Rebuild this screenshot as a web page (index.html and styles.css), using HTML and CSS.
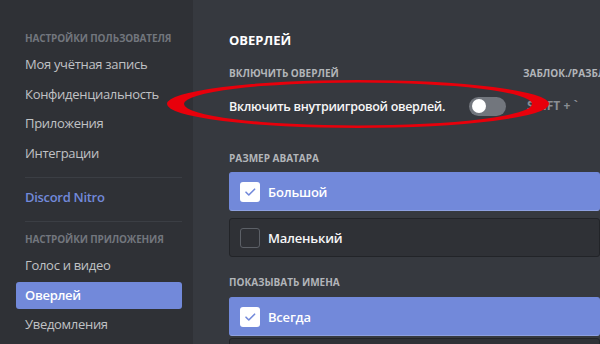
FILE: index.html
```html
<!DOCTYPE HTML>
<html lang="ru">
<head>
    <meta charset="UTF-8">
    <meta name="viewport" content="width=device-width, initial-scale=1.0">
    <title>Настройки — Оверлей</title>
    <link rel="stylesheet" href="styles.css">
</head>
<body>
    <div class="app">
        <nav class="sidebar">
            <div class="side-header">Настройки пользователя</div>
            <div class="side-item">Моя учётная запись</div>
            <div class="side-item">Конфиденциальность</div>
            <div class="side-item">Приложения</div>
            <div class="side-item">Интеграции</div>
            <div class="side-sep"></div>
            <div class="side-item nitro">Discord Nitro</div>
            <div class="side-sep second"></div>
            <div class="side-header">Настройки приложения</div>
            <div class="side-item">Голос и видео</div>
            <div class="side-item active">Оверлей</div>
            <div class="side-item">Уведомления</div>
        </nav>

        <main class="content">
            <h2 class="title">Оверлей</h2>

            <div class="overlay-row">
                <div class="col-enable">
                    <div class="label">Включить оверлей</div>
                    <div class="switch-row">
                        <span class="switch-text">Включить внутриигровой оверлей.</span>
                        <span class="switch"><span class="knob"></span></span>
                    </div>
                </div>
                <div class="col-keybind">
                    <div class="label">Заблок./разблок. оверлей</div>
                    <div class="keybind">SHIFT + `</div>
                </div>
            </div>

            <div class="label section">Размер аватара</div>
            <div class="radio selected">
                <span class="check">
                    <svg width="20" height="20" viewBox="0 0 20 20"><path d="M6 10.2l2.8 2.8L14.6 7.2" fill="none" stroke="#7289da" stroke-width="1.6" stroke-linecap="round" stroke-linejoin="round"/></svg>
                </span>
                Большой
            </div>
            <div class="radio">
                <span class="check empty"></span>
                Маленький
            </div>

            <div class="label section">Показывать имена</div>
            <div class="radio selected">
                <span class="check">
                    <svg width="20" height="20" viewBox="0 0 20 20"><path d="M6 10.2l2.8 2.8L14.6 7.2" fill="none" stroke="#7289da" stroke-width="1.6" stroke-linecap="round" stroke-linejoin="round"/></svg>
                </span>
                Всегда
            </div>
            <div class="radio last"></div>
        </main>

        <!-- hand-drawn red circle around the toggle -->
        <svg class="highlight" width="400" height="54" viewBox="0 0 400 54">
            <path fill="#e8000b" fill-rule="evenodd"
                d="M7,26 a191,24 0 1,0 382,0 a191,24 0 1,0 -382,0Z
                   M24,26 a174,21.5 0 1,0 348,0 a174,21.5 0 1,0 -348,0Z"/>
        </svg>
    </div>
</body>
</html>
```

FILE: styles.css
```css
body {
    margin: 0;
    background-color: #36393f;
    font-family: "Open Sans", "Noto Sans", sans-serif;
    overflow: hidden;
}

.app {
    position: relative;
    display: flex;
    width: 600px;
    height: 344px;
    overflow: hidden;
}

/* sidebar */
.sidebar {
    width: 193px;
    flex-shrink: 0;
    display: flex;
    flex-direction: column;
    background-color: #2f3136;
    padding: 31px 11px 0 16px;
    box-sizing: border-box;
}
.side-header {
    font-size: 10px;
    font-weight: 700;
    line-height: 14px;
    letter-spacing: -0.15px;
    text-transform: uppercase;
    color: #72767d;
    padding-left: 9px;
    margin-bottom: 6px;
    white-space: nowrap;
}
.side-item {
    height: 27px;
    flex-shrink: 0;
    line-height: 27px;
    padding-left: 9px;
    margin-bottom: 2.5px;
    font-size: 13px;
    letter-spacing: -0.3px;
    color: #c0c2c5;
    border-radius: 3px;
    white-space: nowrap;
}
.side-item.active {
    background-color: #7289da;
    color: #fff;
    font-weight: 600;
}
.side-item.nitro {
    color: #7289da;
    font-weight: 600;
}
.side-sep {
    height: 1px;
    flex-shrink: 0;
    background-color: #3b3e44;
    margin: 8px 0 6px 9px;
}
.side-sep.second {
    margin: 7.5px 0 10px 9px;
}

/* content */
.content {
    flex: 1;
    padding: 31px 0 0 36px;
    min-width: 0;
}
.title {
    margin: 0 0 17px;
    font-size: 13px;
    font-weight: 700;
    line-height: 18px;
    text-transform: uppercase;
    color: #fff;
}
.label {
    font-size: 10px;
    font-weight: 700;
    line-height: 14px;
    text-transform: uppercase;
    color: #b2b5b9;
    white-space: nowrap;
}
.overlay-row {
    display: flex;
    gap: 17px;
}
.col-enable {
    width: 277px;
    flex-shrink: 0;
}
.col-keybind {
    overflow: hidden;
}
.switch-row {
    display: flex;
    justify-content: space-between;
    align-items: center;
    margin-top: 15px;
    height: 22px;
}
.switch-text {
    font-size: 12.5px;
    font-weight: 600;
    letter-spacing: -0.3px;
    color: #f6f6f7;
}
.switch {
    width: 37px;
    height: 19px;
    border-radius: 10px;
    background-color: #72767d;
    display: flex;
    align-items: center;
    padding-left: 3px;
    box-sizing: border-box;
}
.knob {
    width: 14px;
    height: 14px;
    border-radius: 50%;
    background-color: #fff;
}
.keybind {
    margin-top: 15px;
    line-height: 22px;
    font-size: 12px;
    font-weight: 700;
    color: #8a8e94;
    padding-left: 4px;
}

.label.section {
    margin: 34px 0 7px;
}
.radio + .label.section {
    margin: 18px 0 8px;
}
.radio {
    display: flex;
    align-items: center;
    gap: 8px;
    height: 39px;
    margin-bottom: 7px;
    padding-left: 10px;
    border-radius: 3px;
    box-sizing: border-box;
    background-color: #2f3136;
    border: 1px solid #222428;
    font-size: 13px;
    font-weight: 600;
    letter-spacing: -0.2px;
    color: #f6f6f7;
}
.radio.selected {
    background-color: #7289da;
    border-color: #7289da;
    border-bottom-color: #8ea1e1;
    color: #fff;
}
.radio.last {
    margin-top: -5px;
}
.check {
    width: 20px;
    height: 20px;
    border-radius: 3px;
    background-color: #fff;
    display: flex;
    flex-shrink: 0;
}
.check.empty {
    background-color: transparent;
    border: 1.5px solid #5c6067;
    box-sizing: border-box;
}

.highlight {
    position: absolute;
    left: 160px;
    top: 78px;
    pointer-events: none;
}
```
